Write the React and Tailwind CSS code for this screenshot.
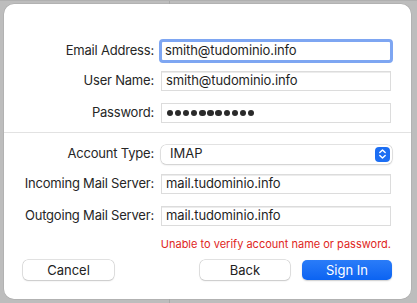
import React from "react";

const font = { fontFamily: "Inter, 'Noto Sans', sans-serif" };

function Row({ label, children, className = "" }) {
  return (
    <div className={"flex items-center h-[20px] " + className}>
      <div className="w-[151px] text-right text-[13px] tracking-[-0.2px] text-[#262626] pr-[1px]">{label}</div>
      <div className="ml-[6px]">{children}</div>
    </div>
  );
}

function Field({ value, focused }) {
  if (focused) {
    return (
      <div className="w-[234px] h-[24px] -ml-[2px] rounded-[4px] border-[3px] border-[#7ea6f2] bg-white flex items-center pl-[3px] text-[13px] tracking-[-0.1px] text-[#1f1f1f]">
        {value}
      </div>
    );
  }
  return (
    <div className="w-[230px] h-[20px] border border-[#dcdcdc] bg-white flex items-center pl-[4px] text-[13px] tracking-[-0.1px] text-[#1f1f1f] shadow-[inset_0_1px_0_#ececec]">
      {value}
    </div>
  );
}

export default function App() {
  const dots = Array.from({ length: 11 });
  return (
    <div className="relative w-[417px] h-[303px] bg-[#bdbdbd] overflow-hidden" style={font}>
      <div className="absolute left-[169px] top-0 w-px h-full bg-[#a9a9a9]" />
      <div className="absolute left-0 top-0 w-full h-px bg-[#b0b0b0]" />
      <div className="relative ml-[4px] mt-[4px] w-[407px] h-[295px] bg-white rounded-[10px] shadow-[0_0_0_0.5px_#a8a8a8] flex flex-col pt-[37px]">
        <Row label="Email Address:">
          <Field value="smith@tudominio.info" focused />
        </Row>
        <Row label="User Name:" className="mt-[10px]">
          <Field value="smith@tudominio.info" />
        </Row>
        <Row label="Password:" className="mt-[12px]">
          <div className="w-[230px] h-[20px] border border-[#dcdcdc] bg-white flex items-center pl-[5px] gap-[1.9px]">
            {dots.map((_, i) => (
              <div key={i} className="w-[6.2px] h-[6.2px] rounded-full bg-[#2a2a2a]" />
            ))}
          </div>
        </Row>
        <div className="h-px bg-[#e2e2e2] mt-[9px]" />
        <Row label="Account Type:" className="mt-[11px]">
          <div className="w-[231px] h-[19px] rounded-[5px] bg-white shadow-[0_0_0_0.5px_#c8c8c8,0_1px_2px_rgba(0,0,0,0.15)] flex items-center justify-between pl-[9px] pr-[2px] text-[13px] text-[#1f1f1f]">
            <span>IMAP</span>
            <div className="w-[15px] h-[15px] rounded-[4px] bg-[#1c6ef3] flex items-center justify-center">
              <svg width="9" height="12" viewBox="0 0 9 12" fill="none" stroke="white" strokeWidth="1.4" strokeLinecap="round" strokeLinejoin="round">
                <path d="M1.8 4.6 L4.5 2 L7.2 4.6" />
                <path d="M1.8 7.4 L4.5 10 L7.2 7.4" />
              </svg>
            </div>
          </div>
        </Row>
        <Row label="Incoming Mail Server:" className="mt-[10px]">
          <Field value="mail.tudominio.info" />
        </Row>
        <Row label="Outgoing Mail Server:" className="mt-[12px]">
          <Field value="mail.tudominio.info" />
        </Row>
        <div className="mt-[11px] h-[14px] leading-[14px] pr-[20px] text-right text-[11px] text-[#e0261c]">
          Unable to verify account name or password.
        </div>
        <div className="mt-[9px] flex items-center pl-[19px] pr-[19px]">
          <button className="w-[91px] h-[20px] rounded-[5px] bg-white shadow-[0_0_0_0.5px_#c4c4c4,0_1px_1.5px_rgba(0,0,0,0.18)] text-[13px] text-[#222] leading-none">
            Cancel
          </button>
          <div className="flex-1" />
          <button className="w-[90px] h-[20px] rounded-[5px] bg-white shadow-[0_0_0_0.5px_#c4c4c4,0_1px_1.5px_rgba(0,0,0,0.18)] text-[13px] text-[#222] leading-none">
            Back
          </button>
          <button className="ml-[12px] w-[90px] h-[20px] rounded-[5px] bg-gradient-to-b from-[#2a7cf8] to-[#0a63f2] shadow-[0_1px_1.5px_rgba(0,0,0,0.2)] text-[13px] text-white leading-none">
            Sign In
          </button>
        </div>
      </div>
    </div>
  );
}
